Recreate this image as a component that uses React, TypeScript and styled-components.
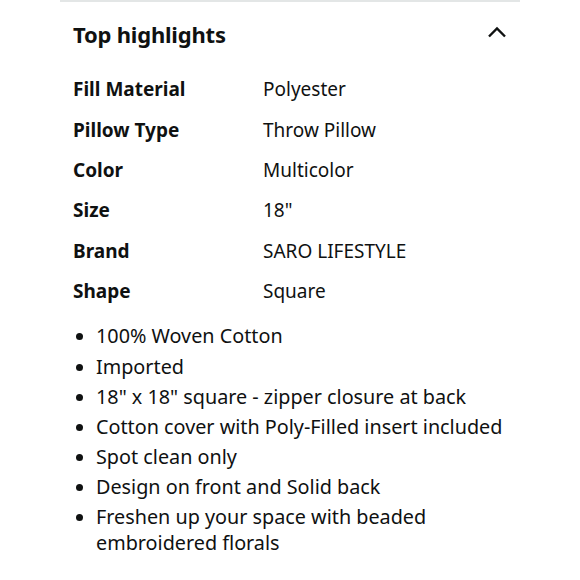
import React from 'react';
import styled, { createGlobalStyle } from 'styled-components';

const GlobalStyle = createGlobalStyle`
  html, body {
    margin: 0;
    padding: 0;
    background: #fff;
  }
  body {
    font-family: "Noto Sans", "Liberation Sans", sans-serif;
    color: #0f1111;
  }
`;

const specs = [
  { label: 'Fill Material', value: 'Polyester' },
  { label: 'Pillow Type', value: 'Throw Pillow' },
  { label: 'Color', value: 'Multicolor' },
  { label: 'Size', value: '18"' },
  { label: 'Brand', value: 'SARO LIFESTYLE' },
  { label: 'Shape', value: 'Square' },
];

const bullets = [
  '100% Woven Cotton',
  'Imported',
  '18" x 18" square - zipper closure at back',
  'Cotton cover with Poly-Filled insert included',
  'Spot clean only',
  'Design on front and Solid back',
  'Freshen up your space with beaded embroidered florals',
];

function App() {
  return (
    <>
      <GlobalStyle />
      <Page>
        <Section>
          <Header>
            <Title>Top highlights</Title>
            <Chevron width="20" height="12" viewBox="0 0 20 12" fill="none">
              <path d="M2 10.5 L10 2.5 L18 10.5" stroke="#0f1111" strokeWidth="2.4" />
            </Chevron>
          </Header>
          <SpecTable>
            {specs.map((s) => (
              <SpecRow key={s.label}>
                <SpecLabel>{s.label}</SpecLabel>
                <SpecValue>{s.value}</SpecValue>
              </SpecRow>
            ))}
          </SpecTable>
          <BulletList>
            {bullets.map((b) => (
              <BulletItem key={b}>{b}</BulletItem>
            ))}
          </BulletList>
        </Section>
      </Page>
    </>
  );
}

const Page = styled.div`
  width: 580px;
  height: 580px;
  overflow: hidden;
  display: flex;
  justify-content: center;
`;

const Section = styled.div`
  width: 460px;
  box-sizing: border-box;
  border-top: 2px solid #e3e6e6;
  padding: 0 13px;
`;

const Header = styled.div`
  display: flex;
  align-items: center;
  justify-content: space-between;
  height: 67px;
`;

const Title = styled.h2`
  margin: 0 0 3px;
  font-size: 22px;
  font-weight: 700;
  letter-spacing: -0.2px;
`;

const Chevron = styled.svg`
  margin-bottom: 7px;
`;

const SpecTable = styled.div`
  display: flex;
  flex-direction: column;
`;

const SpecRow = styled.div`
  display: grid;
  grid-template-columns: 190px 1fr;
  height: 40.4px;
  align-items: center;
  font-size: 19px;
`;

const SpecLabel = styled.span`
  font-weight: 700;
`;

const SpecValue = styled.span`
  font-weight: 400;
`;

const BulletList = styled.ul`
  margin: 12px 0 0;
  padding: 0 0 0 23px;
  font-size: 19.8px;
  line-height: 26px;
`;

const BulletItem = styled.li`
  margin-bottom: 4.2px;
  &::marker {
    font-size: 19px;
  }
`;

export default App;
